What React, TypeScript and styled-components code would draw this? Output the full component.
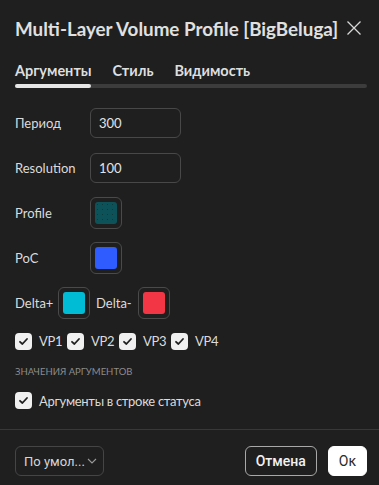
import React from "react";
import styled, { createGlobalStyle } from "styled-components";

const Global = createGlobalStyle`
  html, body { margin: 0; padding: 0; background: #1f1f1f; }
  body { font-family: Lato, "Noto Sans", sans-serif; color: #dbdbdb; }
  * { box-sizing: border-box; }
`;

const Dialog = styled.div`
  width: 379px;
  height: 485px;
  background: #1f1f1f;
  display: flex;
  flex-direction: column;
`;

const Header = styled.div`
  height: 56px;
  padding: 0 15px;
  display: flex;
  align-items: center;
  justify-content: space-between;
`;

const Title = styled.div`
  font-size: 18.8px;
  font-weight: 700;
  color: #e0e0e0;
  white-space: nowrap;
`;

const Close = styled.button`
  width: 18px;
  height: 18px;
  padding: 0;
  border: none;
  background: transparent;
  display: flex;
  align-items: center;
  justify-content: center;
  margin-right: 1px;
`;

const Tabs = styled.div`
  padding: 0 15px;
  display: flex;
  gap: 21px;
  height: 28px;
  align-items: center;
`;

const Tab = styled.div<{ $active?: boolean }>`
  font-size: 14.5px;
  font-weight: 700;
  color: #dedede;
`;

const Track = styled.div`
  margin: 0 12px 0 15px;
  height: 4px;
  border-radius: 2px;
  background: #3c3c3c;
  display: flex;
`;

const Thumb = styled.div`
  width: 76px;
  height: 4px;
  border-radius: 2px;
  background: #e6e6e6;
`;

const Content = styled.div`
  flex: 1;
  padding: 12px 15px 0;
  display: flex;
  flex-direction: column;
`;

const Row = styled.div`
  height: 45px;
  display: flex;
  align-items: center;
`;

const Label = styled.div<{ $w?: number }>`
  width: ${(p) => (p.$w ? `${p.$w}px` : "75px")};
  font-size: 13px;
  color: #dbdbdb;
  white-space: nowrap;
`;

const Input = styled.div`
  width: 91px;
  height: 30px;
  border: 1px solid #484848;
  border-radius: 6px;
  padding: 0 8px;
  display: flex;
  align-items: center;
  font-size: 13px;
  color: #e3e3e3;
`;

const Swatch = styled.div`
  width: 32px;
  height: 32px;
  border: 1px solid #4a4a4a;
  border-radius: 6px;
  padding: 4px;
  display: flex;
`;

const SwatchFill = styled.div<{ $c: string; $dots?: boolean }>`
  flex: 1;
  border-radius: 3px;
  background: ${(p) => p.$c};
  ${(p) =>
    p.$dots
      ? `background-image: radial-gradient(circle, rgba(0,0,0,0.3) 0.5px, transparent 0.7px); background-size: 5px 5px;`
      : ""}
`;

const ChecksRow = styled.div`
  display: flex;
  align-items: center;
  height: 38px;
  margin-top: -3px;
`;

const CheckItem = styled.label<{ $w?: number }>`
  display: flex;
  align-items: center;
  gap: 7px;
  width: ${(p) => (p.$w ? `${p.$w}px` : "auto")};
  font-size: 13px;
  letter-spacing: -0.3px;
  color: #dbdbdb;
  white-space: nowrap;
`;

const Box = styled.span`
  width: 17px;
  height: 17px;
  flex: none;
  border-radius: 4px;
  background: #f0f0f0;
  display: flex;
  align-items: center;
  justify-content: center;
`;

const Section = styled.div`
  font-size: 9.5px;
  color: #8c8c8c;
  text-transform: uppercase;
  height: 22px;
  display: flex;
  align-items: center;
`;

const StatusRow = styled.div`
  height: 37px;
  display: flex;
  align-items: center;
`;

const Divider = styled.div`
  height: 1px;
  background: #383838;
`;

const Footer = styled.div`
  height: 55px;
  padding: 16px 12px 0 15px;
  display: flex;
  align-items: flex-start;
  gap: 11px;
`;

const Select = styled.div`
  width: 89px;
  height: 30px;
  border: 1px solid #454545;
  border-radius: 6px;
  display: flex;
  align-items: center;
  justify-content: space-between;
  padding: 0 6px 0 8px;
  font-size: 13px;
  color: #d6d6d6;
  margin-right: auto;
  font-family: Roboto, "Open Sans", sans-serif;
`;

const Button = styled.button<{ $primary?: boolean }>`
  height: 30px;
  padding: 0 10px;
  border-radius: 6px;
  font-family: Roboto, "Open Sans", sans-serif;
  font-size: 14px;
  font-weight: ${(p) => (p.$primary ? 400 : 500)};
  background: ${(p) => (p.$primary ? "#ffffff" : "transparent")};
  color: ${(p) => (p.$primary ? "#2a2a2a" : "#f2f2f2")};
  border: 1px solid ${(p) => (p.$primary ? "#ffffff" : "#a8a8a8")};
  min-width: ${(p) => (p.$primary ? "38px" : "71px")};
`;

const Check = () => (
  <Box>
    <svg width="11" height="11" viewBox="0 0 11 11">
      <path d="M2 5.8 L4.4 8 L9 3" fill="none" stroke="#1f1f1f" strokeWidth="1.8" strokeLinecap="round" strokeLinejoin="round" />
    </svg>
  </Box>
);

export default function App() {
  return (
    <Dialog>
      <Global />
      <Header>
        <Title>Multi-Layer Volume Profile [BigBeluga]</Title>
        <Close aria-label="close">
          <svg width="16" height="16" viewBox="0 0 16 16">
            <path d="M1.5 1.5 L14.5 14.5 M14.5 1.5 L1.5 14.5" stroke="#d8d8d8" strokeWidth="1.3" fill="none" />
          </svg>
        </Close>
      </Header>
      <Tabs>
        <Tab $active>Аргументы</Tab>
        <Tab>Стиль</Tab>
        <Tab>Видимость</Tab>
      </Tabs>
      <Track>
        <Thumb />
      </Track>
      <Content>
        <Row>
          <Label>Период</Label>
          <Input>300</Input>
        </Row>
        <Row>
          <Label>Resolution</Label>
          <Input>100</Input>
        </Row>
        <Row>
          <Label>Profile</Label>
          <Swatch>
            <SwatchFill $c="#0e5259" $dots />
          </Swatch>
        </Row>
        <Row>
          <Label>PoC</Label>
          <Swatch>
            <SwatchFill $c="#2f5cff" />
          </Swatch>
        </Row>
        <Row>
          <Label $w={43}>Delta+</Label>
          <Swatch>
            <SwatchFill $c="#00bcd4" />
          </Swatch>
          <Label $w={42} style={{ marginLeft: 6 }}>Delta-</Label>
          <Swatch>
            <SwatchFill $c="#f23645" />
          </Swatch>
        </Row>
        <ChecksRow>
          <CheckItem $w={52}><Check />VP1</CheckItem>
          <CheckItem $w={52}><Check />VP2</CheckItem>
          <CheckItem $w={52}><Check />VP3</CheckItem>
          <CheckItem $w={52}><Check />VP4</CheckItem>
        </ChecksRow>
        <Section>Значения аргументов</Section>
        <StatusRow>
          <CheckItem><Check />Аргументы в строке статуса</CheckItem>
        </StatusRow>
      </Content>
      <Divider />
      <Footer>
        <Select>
          <span>По умол...</span>
          <svg width="10" height="6" viewBox="0 0 10 6">
            <path d="M1 1 L5 5 L9 1" fill="none" stroke="#9a9a9a" strokeWidth="1.1" />
          </svg>
        </Select>
        <Button>Отмена</Button>
        <Button $primary>Ок</Button>
      </Footer>
    </Dialog>
  );
}
